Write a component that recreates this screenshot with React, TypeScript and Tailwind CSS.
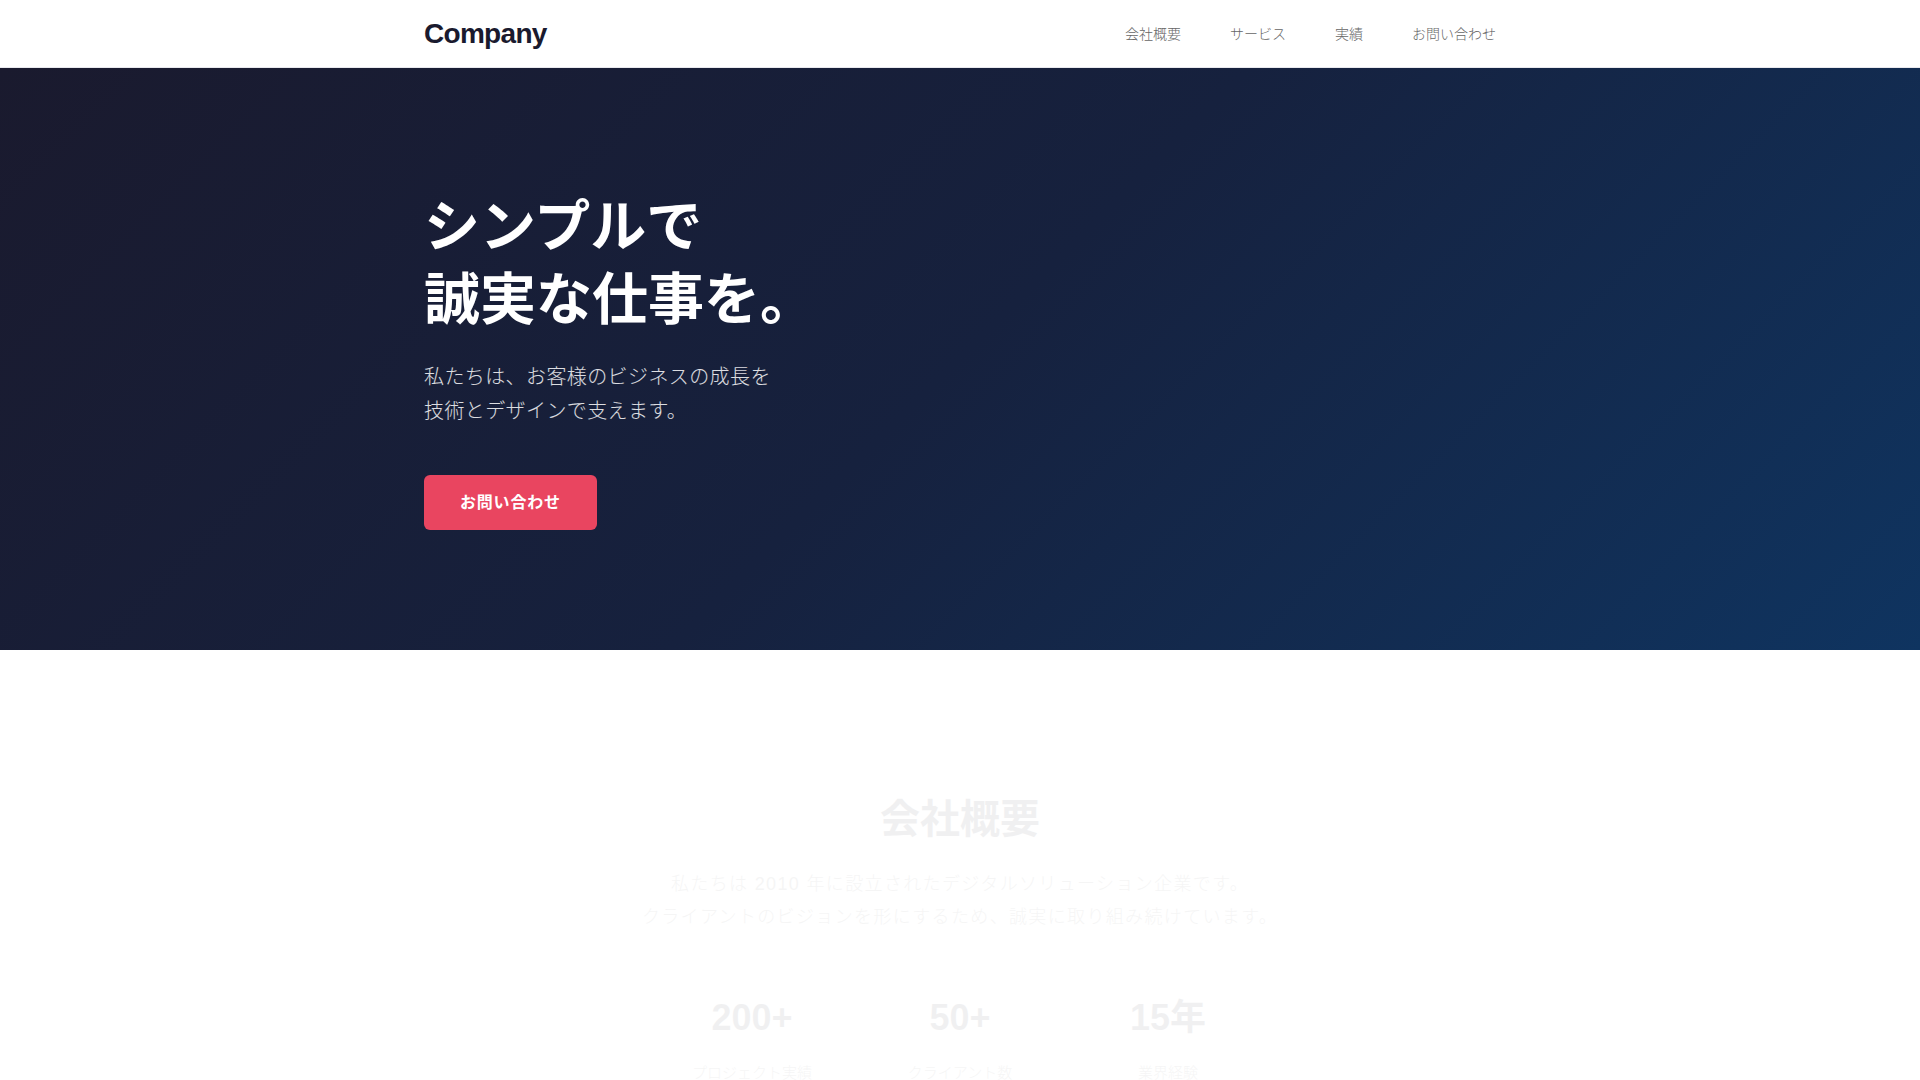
// App.tsx - Corporate landing page (header, hero, company overview)
const navItems = ["会社概要", "サービス", "実績", "お問い合わせ"];

const stats = [
  { value: "200+", label: "プロジェクト実績" },
  { value: "50+", label: "クライアント数" },
  { value: "15年", label: "業界経験" },
];

const App = () => {
  return (
    <div className="min-h-screen bg-white font-['Liberation_Sans','Noto_Sans_CJK_JP',sans-serif]">
      {/* Header */}
      <header className="h-[68px] border-b border-[#e9e9ee] bg-white">
        <div className="mx-auto flex h-full max-w-6xl items-center justify-between px-10">
          <a href="#" className="text-[28px] font-bold tracking-[-0.025em] text-[#1a1a2e]">
            Company
          </a>
          <nav className="flex gap-[49px] text-sm font-light text-[#666666]">
            {navItems.map((item) => (
              <a key={item} href="#" className="hover:text-[#1a1a2e]">
                {item}
              </a>
            ))}
          </nav>
        </div>
      </header>

      {/* Hero */}
      <section className="bg-[linear-gradient(135deg,#1a1a2e_0%,#16213e_50%,#0f3460_100%)] py-30">
        <div className="mx-auto max-w-6xl px-10">
          <h1 className="mb-[23px] pt-[3px] text-[56px] font-bold leading-[1.3] text-white">
            シンプルで
            <br />
            誠実な仕事を。
          </h1>
          <p className="mb-[47px] text-[20px] font-light leading-[1.7] tracking-[0.02em] text-white/85">
            私たちは、お客様のビジネスの成長を
            <br />
            技術とデザインで支えます。
          </p>
          <a
            href="#"
            className="flex w-fit rounded-md bg-[#e94560] px-9 py-4 text-base font-bold leading-[23px] tracking-[0.05em] text-white hover:bg-[#d63a54]"
          >
            お問い合わせ
          </a>
        </div>
      </section>

      {/* Company overview (fading in) */}
      <section className="pt-[141px] pb-24 text-center opacity-[0.06]">
        <div className="mx-auto max-w-6xl px-10">
          <h2 className="mb-[21px] text-[40px] font-bold leading-[1.4] text-[#1a1a2e]">会社概要</h2>
          <p className="text-[18px] font-light leading-[33px] tracking-[0.075em] text-[#666666]">
            私たちは 2010 年に設立されたデジタルソリューション企業です。
            <br />
            クライアントのビジョンを形にするため、誠実に取り組み続けています。
          </p>
          <div className="mx-auto mt-[62px] grid max-w-[600px] grid-cols-3 gap-6">
            {stats.map((s) => (
              <div key={s.label} className="flex flex-col items-center">
                <div className="text-4xl font-bold leading-[1.2] text-[#1a1a2e]">{s.value}</div>
                <div className="mt-[22px] text-[15px] font-light leading-6 text-[#666666]">{s.label}</div>
              </div>
            ))}
          </div>
        </div>
      </section>
    </div>
  );
};

export default App;
